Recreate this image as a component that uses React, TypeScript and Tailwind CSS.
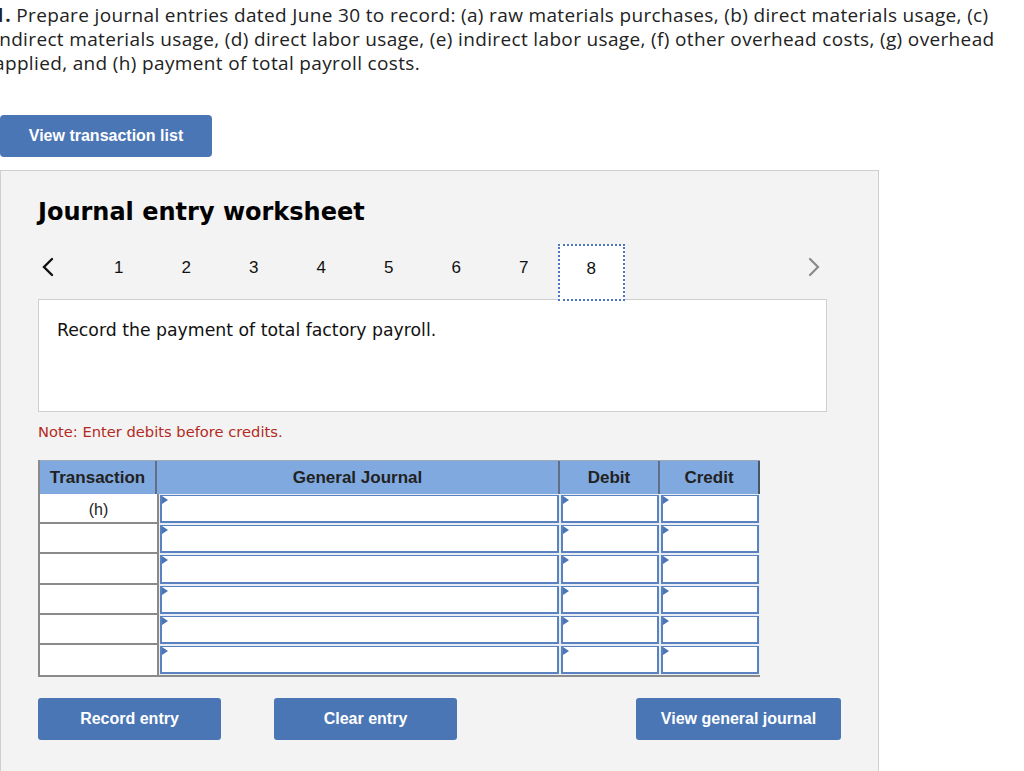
import React from 'react'

const pages = [1, 2, 3, 4, 5, 6, 7, 8]
const rows = ['(h)', '', '', '', '', '']

function InputCell({ first }: { first?: boolean }) {
  return (
    <div className={`h-full bg-[#e9eef5] px-[1px] py-[1px] ${first ? 'border-l-2 border-[#8a8a8a]' : ''}`}>
      <div className="relative h-full bg-white border-2 border-[#5b82c0] border-t-[1px]">
        <span className="absolute left-0 top-0 w-0 h-0 border-y-[4px] border-y-transparent border-l-[6px] border-l-[#4a76b5]" />
      </div>
    </div>
  )
}

export default function App() {
  return (
    <div className="w-[1024px] h-[771px] overflow-hidden bg-white text-[#1f1f1f]">
      <p className="ml-[-6px] pt-[3px] text-[19px] tracking-[0.35px] leading-[24px] font-['Open_Sans','Noto_Sans',sans-serif] text-[#222] whitespace-nowrap">
        <strong>1.</strong> Prepare journal entries dated June 30 to record: (a) raw materials purchases, (b) direct materials usage, (c)
        <br />
        indirect materials usage, (d) direct labor usage, (e) indirect labor usage, (f) other overhead costs, (g) overhead
        <br />
        applied, and (h) payment of total payroll costs.
      </p>

      <button className="mt-[40px] w-[212px] h-[42px] rounded-[4px] bg-[#4a76b5] text-white font-bold text-[16px] font-['Liberation_Sans',Arial,sans-serif]">
        View transaction list
      </button>

      <div className="mt-[13px] w-[879px] h-[620px] bg-[#f3f3f3] border border-[#cfcfcf] pl-[37px] pt-[25px]">
        <h2 className="text-[24px] leading-[32px] font-bold font-['DejaVu_Sans',Verdana,sans-serif] text-black">
          Journal entry worksheet
        </h2>

        <div className="mt-[16px] w-[789px] h-[55px] flex items-start font-['Liberation_Sans',Arial,sans-serif] text-[17px] text-[#111]">
          <div className="w-[47px] h-[55px] flex items-center pl-[3px] pb-[10px]">
            <svg width="14" height="20" viewBox="0 0 14 20" fill="none" stroke="#111" strokeWidth="2.4" strokeLinecap="round">
              <path d="M11 2 L3 10 L11 18" />
            </svg>
          </div>
          {pages.map((p) => (
            <div
              key={p}
              className={`w-[67.5px] flex items-center justify-center pb-[8px] ${
                p === 8
                  ? 'h-[57px] bg-white border-2 border-dotted border-[#4a76c5] relative z-10'
                  : 'h-[55px]'
              }`}
            >
              {p}
            </div>
          ))}
          <div className="ml-auto h-[55px] flex items-center pr-[6px] pb-[10px]">
            <svg width="14" height="20" viewBox="0 0 14 20" fill="none" stroke="#8a8a8a" strokeWidth="2.2" strokeLinecap="round">
              <path d="M3 2 L11 10 L3 18" />
            </svg>
          </div>
        </div>

        <div className="w-[789px] h-[113px] bg-white border border-[#cfcfcf] pl-[18px] pt-[19px] text-[17.3px] leading-[22px] font-['DejaVu_Sans',Verdana,sans-serif] text-[#111]">
          Record the payment of total factory payroll.
        </div>

        <p className="mt-[10px] text-[14.7px] leading-[20px] font-['DejaVu_Sans',Verdana,sans-serif] text-[#b32a22]">
          Note: Enter debits before credits.
        </p>

        <div className="mt-[18px] w-[722px] border-l-2 border-b-2 border-[#8a8a8a] font-['Liberation_Sans',Arial,sans-serif]">
          <div className="grid grid-cols-[117px_403px_100px_100px] h-[34px] bg-[#80a9df] border-t border-[#9aa9bb] text-[17px] font-bold text-[#222]">
            <div className="flex items-center justify-center border-r-2 border-[#5f6f86]">Transaction</div>
            <div className="flex items-center justify-center border-r-2 border-[#5f6f86]">General Journal</div>
            <div className="flex items-center justify-center border-r-2 border-[#5f6f86]">Debit</div>
            <div className="flex items-center justify-center border-r-2 border-[#4a5566]">Credit</div>
          </div>
          {rows.map((t, i) => (
            <div key={i} className="grid grid-cols-[117px_403px_100px_100px] h-[30.2px]">
              <div className={`bg-white flex items-start justify-center pt-[4px] text-[16px] text-[#222] ${i < rows.length - 1 ? 'border-b-2 border-[#8a8a8a]' : ''}`}>
                {t}
              </div>
              <InputCell first />
              <InputCell />
              <InputCell />
            </div>
          ))}
        </div>

        <div className="mt-[21px] w-[803px] flex gap-[53px] font-['Liberation_Sans',Arial,sans-serif] text-[16px] font-bold text-white">
          <button className="w-[183px] h-[42px] rounded-[3px] bg-[#4a76b5]">Record entry</button>
          <button className="w-[183px] h-[42px] rounded-[3px] bg-[#4a76b5]">Clear entry</button>
          <button className="ml-auto w-[205px] h-[42px] rounded-[3px] bg-[#4a76b5]">View general journal</button>
        </div>
      </div>
    </div>
  )
}
